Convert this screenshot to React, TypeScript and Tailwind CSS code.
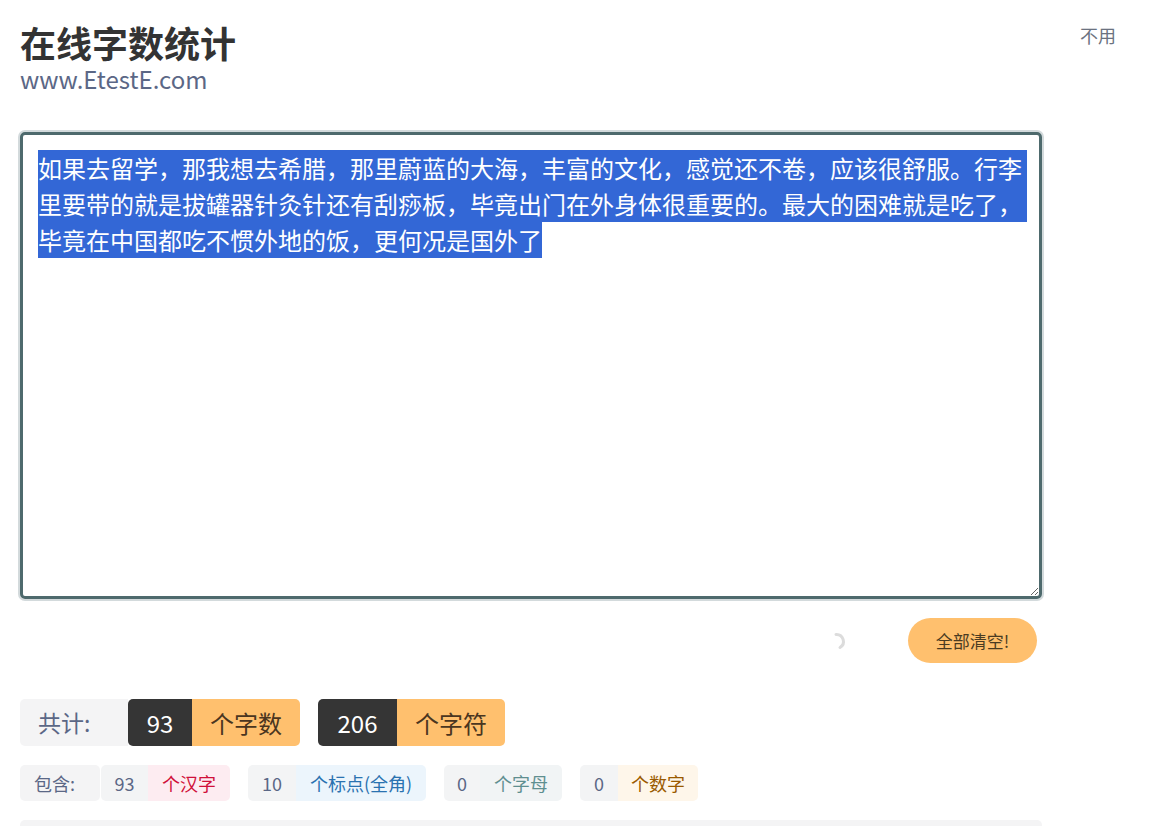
import React, { useEffect, useRef } from 'react';

const TEXT =
  '如果去留学，那我想去希腊，那里蔚蓝的大海，丰富的文化，感觉还不卷，应该很舒服。行李里要带的就是拔罐器针灸针还有刮痧板，毕竟出门在外身体很重要的。最大的困难就是吃了，毕竟在中国都吃不惯外地的饭，更何况是国外了';

const Spinner: React.FC = () => (
  <svg width="16" height="18" viewBox="0 0 16 18" className="mr-[60px]">
    <path d="M4 2.5 A7 7 0 0 1 8 15.5" fill="none" stroke="#dcdcdc" strokeWidth="3" strokeLinecap="round" />
  </svg>
);

const App: React.FC = () => {
  const areaRef = useRef<HTMLTextAreaElement>(null);

  useEffect(() => {
    if (areaRef.current) {
      areaRef.current.focus();
      areaRef.current.select();
    }
  }, []);

  return (
    <div className="min-h-[826px] bg-white font-['Noto_Sans_CJK_SC','Microsoft_YaHei',sans-serif] px-5">
      <div className="flex justify-between pr-[16px]">
        <div>
          <h1 className="pt-[22px] text-[36px] leading-[40px] font-bold text-[#333]">在线字数统计</h1>
          <div className="pt-[2px] text-[24px] leading-[29px] text-[#5b6786]">www.EtestE.com</div>
        </div>
        <div className="pt-[23px] text-[18px] leading-[24px] text-[#6b7280]">不用</div>
      </div>

      <div className="mt-[39px] w-[1022px]">
        <textarea
          ref={areaRef}
          defaultValue={TEXT}
          spellCheck={false}
          className="block w-[1022px] h-[467px] px-[15px] pt-[15px] pb-[15px] text-[24px] leading-[36px] text-[#333] border-[3px] border-[#4e6a6d] rounded-[5px] outline-none shadow-[0_0_0_2px_#d3dadc] selection:bg-[#3367d6] selection:text-white"
        />
      </div>

      <div className="w-[1022px] flex items-center justify-end mt-[19px] pr-[5px]">
        <Spinner />
        <button className="h-[45px] w-[129px] rounded-full bg-[#ffc06e] text-[17px] text-[#4a3b22]">全部清空!</button>
      </div>

      <div className="flex items-stretch mt-[36px] h-[47px] text-[24px]">
        <div className="w-[108px] flex items-center pl-[18px] bg-[#f4f4f5] rounded-l-[5px] text-[23px] text-[#5b6786]">共计:</div>
        <div className="w-[64px] flex items-center justify-center bg-[#353535] text-white rounded-l-[5px]">93</div>
        <div className="w-[108px] flex items-center justify-center bg-[#ffc06e] text-[#4a3520] rounded-r-[5px]">个字数</div>
        <div className="w-[79px] ml-[18px] flex items-center justify-center bg-[#353535] text-white rounded-l-[5px]">206</div>
        <div className="w-[108px] flex items-center justify-center bg-[#ffc06e] text-[#4a3520] rounded-r-[5px]">个字符</div>
      </div>

      <div className="flex items-stretch mt-[19px] h-[36px] text-[18px]">
        <div className="w-[80px] flex items-center pl-[14px] bg-[#f4f4f5] rounded-[5px] text-[#5b6786]">包含:</div>
        <div className="w-[47px] ml-[1px] flex items-center justify-center bg-[#f3f4f5] rounded-l-[5px] text-[#5b6786]">93</div>
        <div className="w-[82px] flex items-center justify-center bg-[#fdecf1] rounded-r-[5px] text-[#d0103a]">个汉字</div>
        <div className="w-[48px] ml-[18px] flex items-center justify-center bg-[#f3f4f5] rounded-l-[5px] text-[#5b6786]">10</div>
        <div className="w-[130px] flex items-center justify-center bg-[#ecf5fc] rounded-r-[5px] text-[#2a72b0]">个标点(全角)</div>
        <div className="w-[36px] ml-[18px] flex items-center justify-center bg-[#f3f4f5] rounded-l-[5px] text-[#5b6786]">0</div>
        <div className="w-[82px] flex items-center justify-center bg-[#f1f4f5] rounded-r-[5px] text-[#5f8f90]">个字母</div>
        <div className="w-[38px] ml-[18px] flex items-center justify-center bg-[#f3f4f5] rounded-l-[5px] text-[#5b6786]">0</div>
        <div className="w-[80px] flex items-center justify-center bg-[#fef6ea] rounded-r-[5px] text-[#9a5a00]">个数字</div>
      </div>

      <div className="mt-[19px] w-[1022px] h-[40px] bg-[#f4f4f5] rounded-t-[5px]" />
    </div>
  );
};

export default App;
